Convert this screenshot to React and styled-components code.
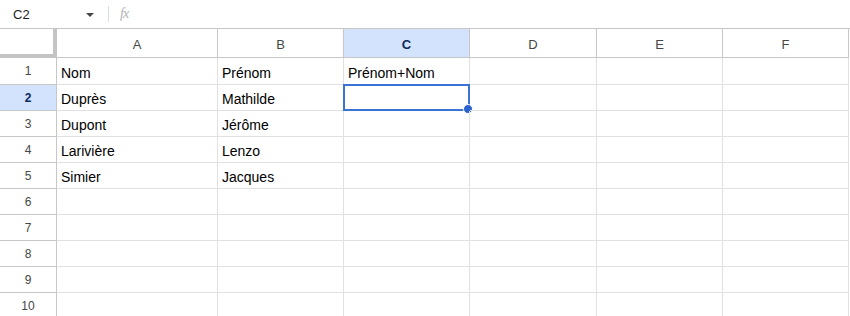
import styled, { createGlobalStyle } from "styled-components";

const GlobalStyle = createGlobalStyle`
  html, body {
    margin: 0;
    padding: 0;
    background: #ffffff;
    font-family: "Liberation Sans", Arial, sans-serif;
  }
`;

const Page = styled.div`
  width: 850px;
  height: 316px;
  overflow: hidden;
  background: #fff;
`;

const FormulaBar = styled.div`
  height: 28px;
  border-bottom: 1px solid #c7c7c7;
  display: flex;
  align-items: center;
`;

const NameBox = styled.div`
  width: 80px;
  padding-left: 13px;
  font-size: 13px;
  color: #1f1f1f;
`;

const Caret = styled.div`
  width: 0;
  height: 0;
  border-left: 4px solid transparent;
  border-right: 4px solid transparent;
  border-top: 4px solid #444746;
  margin-left: -7px;
  margin-top: 1px;
`;

const Divider = styled.div`
  width: 1px;
  height: 16px;
  background: #dadce0;
  margin-left: 14px;
`;

const Fx = styled.span`
  margin-left: 11px;
  font-family: "Liberation Serif", "Times New Roman", serif;
  font-style: italic;
  font-size: 14px;
  color: #b0b3b6;
  letter-spacing: -1px;
`;

const Grid = styled.div`
  display: grid;
  grid-template-columns: 57px 161px 126px 126px 127px 126px 126px;
  grid-template-rows: 29px 27px repeat(9, 26px);
`;

const Corner = styled.div`
  background: #fff;
  border-right: 4px solid #c4c4c4;
  border-bottom: 4px solid #c4c4c4;
  box-sizing: border-box;
`;

const ColHead = styled.div`
  box-sizing: border-box;
  border-right: 1px solid #c7c7c7;
  border-bottom: 1px solid #c7c7c7;
  background: ${(p) => (p.$active ? "#d3e3fd" : "#fff")};
  color: ${(p) => (p.$active ? "#0b2a5e" : "#444746")};
  font-weight: ${(p) => (p.$active ? 700 : 400)};
  font-size: 13px;
  display: flex;
  align-items: center;
  justify-content: center;
  padding-top: 2px;
`;

const RowHead = styled.div`
  box-sizing: border-box;
  border-right: 1px solid #c7c7c7;
  border-bottom: 1px solid #c7c7c7;
  background: ${(p) => (p.$active ? "#d3e3fd" : "#fff")};
  color: ${(p) => (p.$active ? "#0b2a5e" : "#444746")};
  font-weight: ${(p) => (p.$active ? 700 : 400)};
  font-size: 12px;
  display: flex;
  align-items: center;
  justify-content: center;
`;

const Cell = styled.div`
  position: relative;
  box-sizing: border-box;
  border-right: 1px solid #e1e1e1;
  border-bottom: 1px solid #e1e1e1;
  font-size: 14px;
  color: #000;
  display: flex;
  align-items: flex-end;
  padding: 0 4px 3px;
  white-space: nowrap;
`;

const Selection = styled.div`
  position: absolute;
  left: -1px;
  top: -1px;
  right: -1px;
  bottom: -1px;
  border: 2px solid #3b73d4;
  pointer-events: none;
`;

const Handle = styled.div`
  position: absolute;
  right: -5px;
  bottom: -5px;
  width: 8px;
  height: 8px;
  border-radius: 50%;
  background: #2a62cf;
  border: 1px solid #fff;
`;

const columns = ["A", "B", "C", "D", "E", "F"];

const data = [
  ["Nom", "Prénom", "Prénom+Nom"],
  ["Duprès", "Mathilde", ""],
  ["Dupont", "Jérôme"],
  ["Larivière", "Lenzo"],
  ["Simier", "Jacques"],
];

export default function App() {
  const activeCol = 2;
  const activeRow = 1;
  return (
    <Page>
      <GlobalStyle />
      <FormulaBar>
        <NameBox>C2</NameBox>
        <Caret />
        <Divider />
        <Fx>fx</Fx>
      </FormulaBar>
      <Grid>
        <Corner />
        {columns.map((c, i) => (
          <ColHead key={c} $active={i === activeCol}>
            {c}
          </ColHead>
        ))}
        {Array.from({ length: 10 }).map((_, r) => (
          <Row key={r} r={r} active={r === activeRow} activeCol={activeCol} />
        ))}
      </Grid>
    </Page>
  );
}

function Row({ r, active, activeCol }) {
  const values = data[r] || [];
  return (
    <>
      <RowHead $active={active}>{r + 1}</RowHead>
      {columns.map((c, i) => (
        <Cell key={c}>
          {values[i] || ""}
          {active && i === activeCol && (
            <Selection>
              <Handle />
            </Selection>
          )}
        </Cell>
      ))}
    </>
  );
}
